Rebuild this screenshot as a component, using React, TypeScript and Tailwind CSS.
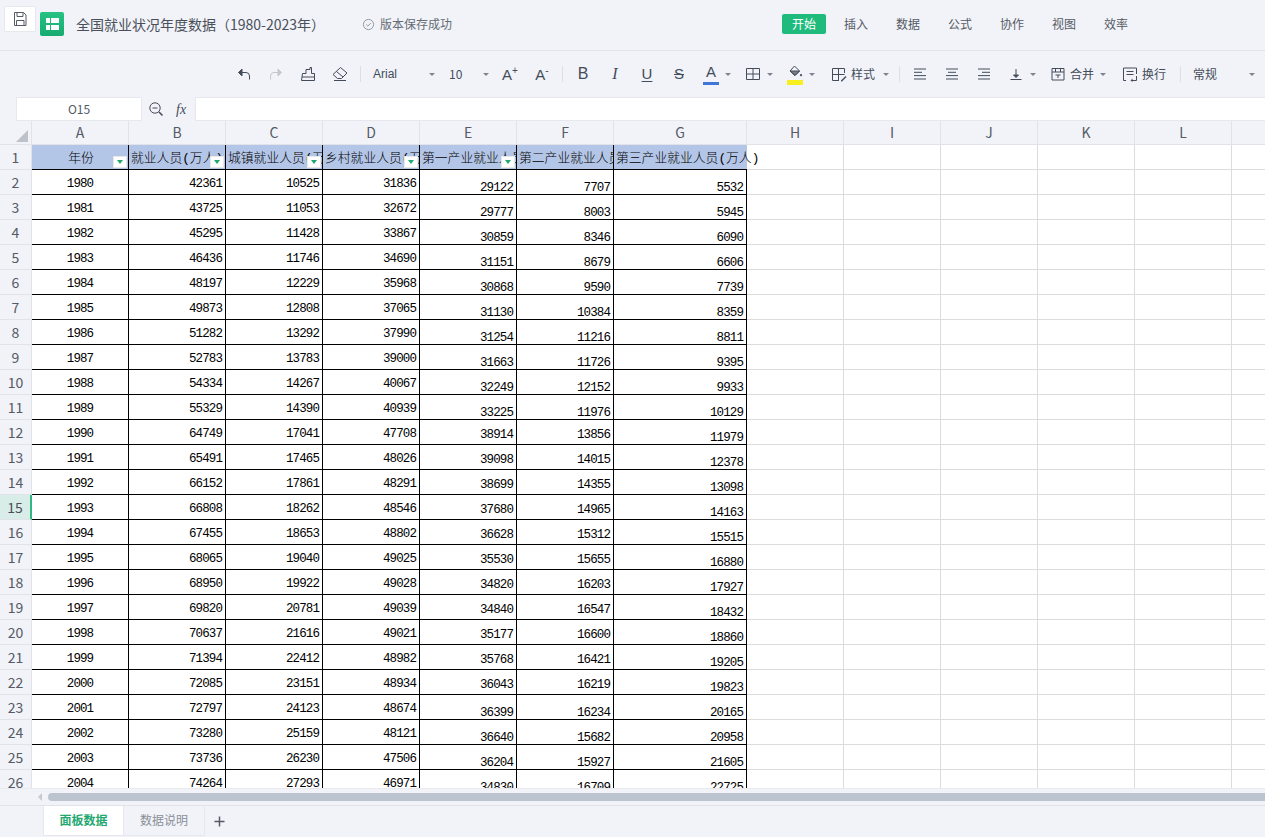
import React from "react";

const UI = "font-['Noto_Sans_CJK_SC',sans-serif]";
const MONO = "font-['Liberation_Mono','Noto_Sans_CJK_SC',monospace]";

const rows: number[][] = [
  [1980, 42361, 10525, 31836, 29122, 7707, 5532],
  [1981, 43725, 11053, 32672, 29777, 8003, 5945],
  [1982, 45295, 11428, 33867, 30859, 8346, 6090],
  [1983, 46436, 11746, 34690, 31151, 8679, 6606],
  [1984, 48197, 12229, 35968, 30868, 9590, 7739],
  [1985, 49873, 12808, 37065, 31130, 10384, 8359],
  [1986, 51282, 13292, 37990, 31254, 11216, 8811],
  [1987, 52783, 13783, 39000, 31663, 11726, 9395],
  [1988, 54334, 14267, 40067, 32249, 12152, 9933],
  [1989, 55329, 14390, 40939, 33225, 11976, 10129],
  [1990, 64749, 17041, 47708, 38914, 13856, 11979],
  [1991, 65491, 17465, 48026, 39098, 14015, 12378],
  [1992, 66152, 17861, 48291, 38699, 14355, 13098],
  [1993, 66808, 18262, 48546, 37680, 14965, 14163],
  [1994, 67455, 18653, 48802, 36628, 15312, 15515],
  [1995, 68065, 19040, 49025, 35530, 15655, 16880],
  [1996, 68950, 19922, 49028, 34820, 16203, 17927],
  [1997, 69820, 20781, 49039, 34840, 16547, 18432],
  [1998, 70637, 21616, 49021, 35177, 16600, 18860],
  [1999, 71394, 22412, 48982, 35768, 16421, 19205],
  [2000, 72085, 23151, 48934, 36043, 16219, 19823],
  [2001, 72797, 24123, 48674, 36399, 16234, 20165],
  [2002, 73280, 25159, 48121, 36640, 15682, 20958],
  [2003, 73736, 26230, 47506, 36204, 15927, 21605],
  [2004, 74264, 27293, 46971, 34830, 16709, 22725],
];

const headers = [
  "年份",
  "就业人员(万人)",
  "城镇就业人员(万人)",
  "乡村就业人员(万人)",
  "第一产业就业人员(万人)",
  "第二产业就业人员(万人)",
  "第三产业就业人员(万人)",
];

const letters = ["A", "B", "C", "D", "E", "F", "G", "H", "I", "J", "K", "L", "M"];
const menus = ["插入", "数据", "公式", "协作", "视图", "效率"];

// stroke icon on a 16 box
const Ico: React.FC<{ children: React.ReactNode; className?: string }> = ({ children, className }) => (
  <svg viewBox="0 0 16 16" fill="none" stroke="currentColor" strokeWidth={1} className={className ?? "w-4 h-4"}>
    {children}
  </svg>
);

const Caret = () => (
  <span className="w-0 h-0 border-x-[3px] border-x-transparent border-t-[3px] border-t-[#7d8390] shrink-0" />
);

const Sep = () => <span className="w-px h-4 bg-[#dcdfe5] shrink-0" />;

const Btn: React.FC<{ children: React.ReactNode }> = ({ children }) => (
  <span className="w-8 h-6 flex items-center justify-center shrink-0">{children}</span>
);

const Toolbar = () => (
  <div className={`h-[46px] flex items-center pl-[228px] text-[#444c5a] bg-[#f1f3f8] ${UI}`}>
    <Btn>
      <Ico>
        <path d="M3 6.5h7a3.5 3.5 0 0 1 3.5 3.5v3.5" />
        <path d="M6 3 2.5 6.5 6 10z" fill="currentColor" />
      </Ico>
    </Btn>
    <Btn>
      <Ico className="w-4 h-4 text-[#c3c6cd]">
        <path d="M13 6.5H6A3.5 3.5 0 0 0 2.5 10v3.5" />
        <path d="M10 3l3.5 3.5L10 10z" fill="currentColor" />
      </Ico>
    </Btn>
    <Btn>
      <Ico>
        <path d="M1.5 14.5 2.5 7.5H6V3.5h4V1.5l1.5 0V7.5h3v7z" />
        <path d="M2 11h12.5" />
      </Ico>
    </Btn>
    <Btn>
      <Ico>
        <path d="M8.5 1.5 15 7l-5.5 5.5H5.5L1 8.5z" />
        <path d="M4.5 5.5 11 11" />
        <path d="M2 14.5h12" />
      </Ico>
    </Btn>
    <span className="w-1 shrink-0" />
    <Sep />
    <span className="w-[76px] pl-3 flex items-center justify-between pr-[2px] shrink-0 font-['Liberation_Sans',sans-serif] text-[12px]">
      Arial
      <Caret />
    </span>
    <span className="w-[57px] pl-3 flex items-center gap-[20px] shrink-0 text-[12px]">
      <span className="w-[14px]">10</span>
      <Caret />
    </span>
    <Btn>
      <span className="font-['Liberation_Sans',sans-serif] text-[15px] leading-none font-light">
        A<sup className="text-[10px] top-[-6px]">+</sup>
      </span>
    </Btn>
    <Btn>
      <span className="font-['Liberation_Sans',sans-serif] text-[15px] leading-none font-light">
        A<sup className="text-[10px] top-[-6px]">-</sup>
      </span>
    </Btn>
    <span className="w-1 shrink-0" />
    <Sep />
    <span className="w-1 shrink-0" />
    <Btn>
      <span className="font-['Liberation_Sans',sans-serif] text-[16px]">B</span>
    </Btn>
    <Btn>
      <span className="font-['Liberation_Serif',serif] italic text-[16px]">I</span>
    </Btn>
    <Btn>
      <span className="font-['Liberation_Sans',sans-serif] text-[15px] underline underline-offset-2">U</span>
    </Btn>
    <Btn>
      <span className="font-['Liberation_Sans',sans-serif] text-[15px] line-through">S</span>
    </Btn>
    <span className="w-[42px] pl-2 flex items-center gap-[6px] shrink-0">
      <span className="w-4 h-6 relative flex justify-center">
        <span className="font-['Liberation_Sans',sans-serif] text-[15px] leading-[20px]">A</span>
        <span className="absolute left-0 bottom-[1px] w-4 h-[3px] bg-[#3f77d8]" />
      </span>
      <Caret />
    </span>
    <span className="w-[42px] pl-2 flex items-center gap-[6px] shrink-0">
      <Ico>
        <path d="M1.5 2.5h13v11h-13zM8 2.5v11M1.5 8h13" />
      </Ico>
      <Caret />
    </span>
    <span className="w-[42px] pl-2 flex items-center gap-[6px] shrink-0">
      <span className="w-4 h-6 relative">
        <Ico className="w-4 h-4 absolute top-[3px] left-0">
          <path d="M7.5 1 12.5 6l-4.5 4.5L3 6z" />
          <path d="M3 6h9.5l-4.5 4.5z" fill="currentColor" fillOpacity={0.7} />
          <path d="M14 9c.8 1 .8 2 0 2s-.8-1 0-2z" fill="currentColor" />
        </Ico>
        <span className="absolute left-0 bottom-[1px] w-4 h-[5px] bg-[#f6f01f]" />
      </span>
      <Caret />
    </span>
    <span className="pl-[10px] pr-[10px] flex items-center shrink-0 text-[12px]">
      <Ico>
        <path d="M13.5 7V2.5h-12v12H8M1.5 8.5h12M7.5 2.5v12" />
        <path d="M10 14.5l4.5-4.5 1 1-4.5 4.5h-1z" fill="currentColor" stroke="none" />
      </Ico>
      <span className="ml-1 w-6">样式</span>
      <span className="ml-2 flex">
        <Caret />
      </span>
    </span>
    <Sep />
    <span className="w-1 shrink-0" />
    <Btn>
      <Ico>
        <path d="M2 3h12M2 6.3h8M2 9.6h12M2 13h12" />
      </Ico>
    </Btn>
    <Btn>
      <Ico>
        <path d="M2 3h12M4 6.3h8M2 9.6h12M2 13h12" />
      </Ico>
    </Btn>
    <Btn>
      <Ico>
        <path d="M2 3h12M6 6.3h8M2 9.6h12M2 13h12" />
      </Ico>
    </Btn>
    <span className="pl-2 flex items-center gap-[6px] shrink-0">
      <Ico>
        <path d="M8 3v7M2.5 13.5h11" />
        <path d="M5.5 9 8 11.5 10.5 9z" fill="currentColor" />
      </Ico>
      <Caret />
    </span>
    <span className="pl-[14px] flex items-center shrink-0 text-[12px]">
      <Ico>
        <path d="M2 2.5h12v11.5H2zM2 6h12M5.5 2.5V6M10.5 2.5V6M5.5 9h5M8 9v3" />
      </Ico>
      <span className="ml-1 w-6">合并</span>
      <span className="ml-[6px] flex">
        <Caret />
      </span>
    </span>
    <span className="pl-4 pr-[14px] flex items-center shrink-0 text-[12px]">
      <Ico>
        <path d="M14.5 8V2H1.5v12.5H4M4.5 5.5h7M4.5 8.5h7M14.5 10v4.5H9" />
        <path d="M10.5 12.5 8.5 14.5l2 1.5z" fill="currentColor" stroke="none" />
      </Ico>
      <span className="ml-1 w-6">换行</span>
    </span>
    <Sep />
    <span className="pl-3 flex items-center gap-8 shrink-0 text-[12px]">
      <span className="w-6">常规</span>
      <Caret />
    </span>
  </div>
);

const TopBar = () => (
  <div className={`h-[51px] border-b border-[#e1e3e8] flex items-start pl-1 bg-[#f1f3f8] ${UI}`}>
    <span className="mt-[6px] w-8 h-[26px] bg-white border border-[#e6e8ed] rounded-[2px] flex items-center justify-center text-[#555b67] shrink-0">
      <Ico>
        <path d="M2.5 1.5h9l2.5 2.5v10.5h-11.5zM5 1.5v4h6v-4M4.5 14.5v-5h7.5v5" />
      </Ico>
    </span>
    <span className="mt-3 ml-1 w-6 h-6 rounded-[2px] bg-gradient-to-b from-[#27c283] to-[#16ab70] grid grid-cols-[4px_8px] grid-rows-[5px_5px] gap-x-[1px] gap-y-[2px] justify-center content-center shrink-0">
      <span className="bg-white" />
      <span className="bg-white" />
      <span className="bg-white" />
      <span className="bg-white" />
    </span>
    <span className="ml-3 mt-[14px] text-[14px] leading-[20px] text-[#4a4f5a] w-[286px] whitespace-nowrap">
      全国就业状况年度数据（1980-2023年）
    </span>
    <span className="mt-[14px] flex items-center text-[12px] leading-[20px] text-[#666b75] w-[420px] gap-[5px]">
      <svg viewBox="0 0 14 14" fill="none" stroke="#8d929c" strokeWidth={1} className="w-[13px] h-[13px]">
        <circle cx="7" cy="7" r="5.5" />
        <path d="M4.5 7 6.3 8.8 9.5 5.5" />
      </svg>
      版本保存成功
    </span>
    <span className="mt-[14px] w-11 h-5 rounded-[2px] bg-[#1fbb7c] text-white text-[12px] leading-[20px] text-center shrink-0">
      开始
    </span>
    <span className="mt-[14px] ml-[18px] flex gap-7 text-[12px] leading-[20px] text-[#555a65]">
      {menus.map((m) => (
        <span key={m} className="w-6 whitespace-nowrap">
          {m}
        </span>
      ))}
    </span>
  </div>
);

const FormulaBar = () => (
  <div className={`h-6 flex items-stretch pl-4 bg-[#f1f3f8] ${UI}`}>
    <span className="w-[126px] bg-white border border-[#e6e8ed] text-[12px] text-[#555a65] flex items-center justify-center">
      O15
    </span>
    <span className="w-[28px] ml-[6px] flex items-center text-[#444c5a]">
      <Ico>
        <circle cx="7" cy="7" r="5.2" />
        <path d="M4.5 7h5" />
        <path d="M11 11l3.5 3.5" strokeWidth={1.6} />
      </Ico>
    </span>
    <span className="w-[19px] font-['Liberation_Serif',serif] italic text-[14px] text-[#444c5a] flex items-center">
      fx
    </span>
    <span className="flex-1 bg-white border-y border-l border-[#e6e8ed]" />
  </div>
);

const Filter = () => (
  <span className="absolute right-[1px] bottom-[1px] w-[14px] h-[12px] bg-white border border-[#e8e8e8] flex items-center justify-center">
    <span className="w-0 h-0 border-x-[3.5px] border-x-transparent border-t-[4px] border-t-[#1fa870]" />
  </span>
);

// one spreadsheet row of seven data columns and the empty ones to the right
const DataRow: React.FC<{ n: number; values: number[] }> = ({ n, values }) => {
  const midEF = n >= 12 && n <= 22;
  return (
    <div className="flex h-[25px] shrink-0 w-max">
      <span
        className={`w-8 shrink-0 border-b border-r flex items-center justify-center text-[14px] ${UI} ${
          n === 15
            ? "bg-[#d9ede8] border-b-[#e1e3e8] border-r-2 border-r-[#2fb884] text-[#4a4f5a]"
            : "bg-[#f1f3f8] border-[#e1e3e8] text-[#555a65]"
        }`}
      >
        {n}
      </span>
      {values.map((v, i) => {
        const isLast = i === 6;
        const isEF = i === 4 || i === 5;
        const bottom = isLast || (isEF && !midEF);
        return (
          <span
            key={i}
            className={`shrink-0 border-b border-r border-black flex text-[12.5px] tracking-[-0.9px] text-black ${MONO} ${
              isLast ? "w-[133px]" : "w-[97px]"
            } ${i === 0 ? "justify-center" : "justify-end pr-[3px]"} ${
              bottom ? "items-end leading-[12px]" : isEF ? "items-center leading-[14px] pt-[6px]" : "items-center leading-[14px] pt-[4px]"
            }`}
          >
            {v}
          </span>
        );
      })}
      {letters.slice(7).map((l) => (
        <span key={l} className="w-[97px] shrink-0 border-b border-r border-[#dcdcdc] bg-white" />
      ))}
    </div>
  );
};

const Sheet = () => (
  <div className="h-[667px] overflow-hidden bg-white flex flex-col">
    {/* column letters */}
    <div className="flex h-6 shrink-0 w-max">
      <span className="w-8 shrink-0 bg-[#f1f3f8] border-r border-b border-[#e1e3e8] relative">
        <span className="absolute right-[3px] bottom-[2px] w-0 h-0 border-l-[12px] border-l-transparent border-b-[12px] border-b-[#bdc1c9]" />
      </span>
      {letters.map((l, i) => (
        <span
          key={l}
          className={`shrink-0 bg-[#f1f3f8] border-r border-b border-[#e1e3e8] flex items-center justify-center text-[14px] text-[#555a65] ${UI} ${
            i === 6 ? "w-[133px]" : "w-[97px]"
          }`}
        >
          {l}
        </span>
      ))}
    </div>
    {/* filter header row */}
    <div className="flex h-[25px] shrink-0 w-max">
      <span className={`w-8 shrink-0 bg-[#f1f3f8] border-r border-b border-[#e1e3e8] flex items-center justify-center text-[14px] text-[#555a65] ${UI}`}>
        1
      </span>
      {headers.map((h, i) => (
        <span
          key={h}
          className={`relative shrink-0 h-[25px] bg-[#b4c6e7] border-b border-black text-[12.8px] leading-[27px] font-light text-black whitespace-nowrap ${MONO} ${
            i === 6 ? "w-[133px] pl-[2px] z-10" : "w-[97px] border-r pl-[2px]"
          } ${i === 0 ? "text-center" : ""}`}
        >
          {i === 6 ? (
            h
          ) : (
            <span className="block overflow-hidden">{h}</span>
          )}
          {i < 5 && <Filter />}
        </span>
      ))}
      {letters.slice(7).map((l) => (
        <span key={l} className="w-[97px] shrink-0 border-b border-r border-[#dcdcdc] bg-white" />
      ))}
    </div>
    {rows.map((r, i) => (
      <DataRow key={r[0]} n={i + 2} values={r} />
    ))}
  </div>
);

const ScrollBar = () => (
  <div className="h-[18px] border-b border-[#e1e3e8] border-t border-t-[#e8eaee] bg-[#f1f3f8] flex items-center pl-[38px]">
    <span className="w-0 h-0 border-y-[4px] border-y-transparent border-r-[4px] border-r-[#c5c9d1]" />
    <span className="ml-[6px] flex-1 h-2 rounded-l-full bg-[#bcc4cf]" />
  </div>
);

const Tabs = () => (
  <div className={`h-[31px] flex items-stretch pl-[43px] pb-[1px] bg-[#f1f3f8] ${UI} text-[12px]`}>
    <span className="w-[81px] pb-[2px] bg-white border-x border-b border-[#e6e8ed] flex items-center justify-center text-[#1fa870] font-bold">
      面板数据
    </span>
    <span className="w-[81px] pb-[2px] border-r border-b border-[#e6e8ed] flex items-center justify-center text-[#8a8f99]">
      数据说明
    </span>
    <span className="ml-[9px] flex items-center text-[#555a65]">
      <svg viewBox="0 0 12 12" stroke="currentColor" strokeWidth={1.6} className="w-[11px] h-[11px]">
        <path d="M6 0.5v11M0.5 6h11" />
      </svg>
    </span>
  </div>
);

export default function App() {
  return (
    <div className="w-[1265px] h-[837px] overflow-hidden flex flex-col bg-[#f1f3f8]">
      <TopBar />
      <Toolbar />
      <FormulaBar />
      <Sheet />
      <ScrollBar />
      <Tabs />
    </div>
  );
}
